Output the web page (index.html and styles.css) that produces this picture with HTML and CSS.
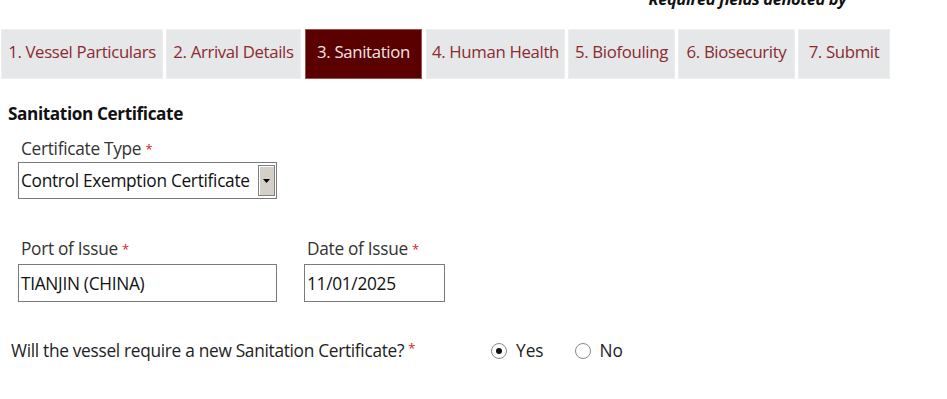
FILE: index.html
```html
<!DOCTYPE html>
<html>
<head>
<meta charset="utf-8">
<link rel="stylesheet" href="styles.css">
</head>
<body>
<div class="top">
  <div class="req">Required fields denoted by <span class="star">*</span></div>
</div>
<nav class="tabs">
  <div class="tab t1">1. Vessel Particulars</div>
  <div class="tab t2">2. Arrival Details</div>
  <div class="tab t3 active">3. Sanitation</div>
  <div class="tab t4">4. Human Health</div>
  <div class="tab t5">5. Biofouling</div>
  <div class="tab t6">6. Biosecurity</div>
  <div class="tab t7">7. Submit</div>
</nav>
<section class="content">
  <h2 class="heading">Sanitation Certificate</h2>
  <div class="field">
    <div class="label">Certificate Type <span class="star">*</span></div>
    <div class="select">
      <span class="select-text">Control Exemption Certificate</span>
      <span class="select-btn"><svg width="7" height="4" viewBox="0 0 7 4"><path d="M0 0H7L3.5 4Z" fill="#000"/></svg></span>
    </div>
  </div>
  <div class="row">
    <div class="field">
      <div class="label">Port of Issue <span class="star">*</span></div>
      <div class="input port">TIANJIN (CHINA)</div>
    </div>
    <div class="field">
      <div class="label">Date of Issue <span class="star">*</span></div>
      <div class="input date">11/01/2025</div>
    </div>
  </div>
  <div class="question">
    <div class="qtext">Will the vessel require a new Sanitation Certificate? <span class="star">*</span></div>
    <div class="radios">
      <span class="radio checked"><span class="dot"></span></span><span class="rlabel">Yes</span>
      <span class="radio"></span><span class="rlabel">No</span>
    </div>
  </div>
</section>
</body>
</html>
```
FILE: styles.css
```css
html, body {
  margin: 0;
  padding: 0;
  background: #fff;
}
body {
  font-family: "Open Sans", "Liberation Sans", sans-serif;
  color: #222;
  width: 947px;
  height: 399px;
  overflow: hidden;
}
.top {
  height: 29px;
  display: flex;
  justify-content: flex-end;
  padding-right: 90px;
}
.req {
  margin-top: -12px;
  font-size: 16.5px;
  font-weight: 700;
  font-style: italic;
  line-height: 22px;
  color: #111;
  letter-spacing: -0.4px;
}
.star {
  color: #e02020;
  font-weight: 400;
  font-style: normal;
  font-size: 13px;
  vertical-align: top;
}
.tabs {
  display: flex;
  gap: 3px;
  padding-left: 1px;
  height: 50px;
}
.tab {
  box-sizing: border-box;
  height: 50px;
  background: #e6e7e8;
  border: 1px solid #eeeeef;
  color: #8b2a31;
  font-size: 16.8px;
  letter-spacing: -0.35px;
  display: flex;
  align-items: center;
  justify-content: center;
  white-space: nowrap;
  padding-bottom: 5px;
}
.t1 { width: 162px; }
.t2 { width: 135px; }
.t3 { width: 117px; margin-left: 1px; }
.t4 { width: 139px; margin-left: 1px; }
.t5 { width: 107px; }
.t6 { width: 117px; }
.t7 { width: 92px; }
.tab.active {
  background: #5a0000;
  border-color: #9b5050;
  color: #f3e6e6;
}
.content {
  padding-left: 8px;
}
.heading {
  margin: 0;
  padding-top: 25px;
  font-size: 17.2px;
  font-weight: 700;
  line-height: 20px;
  color: #111;
  letter-spacing: -0.4px;
}
.field {
  padding-left: 10px;
}
.label {
  margin-top: 15px;
  margin-left: 3px;
  font-size: 17.3px;
  line-height: 20px;
  letter-spacing: -0.3px;
  color: #333;
}
.label .star { font-size: 13px; }
.select {
  margin-top: 3px;
  box-sizing: border-box;
  width: 259px;
  height: 37px;
  border: 1px solid #7a7a7a;
  display: flex;
  align-items: center;
  justify-content: space-between;
  padding: 0 1px 0 2px;
  background: #fff;
}
.select-text {
  font-size: 17.3px;
  letter-spacing: -0.3px;
  color: #111;
}
.select-btn {
  box-sizing: border-box;
  width: 17px;
  height: 31px;
  background: #d4d0c8;
  border: 1px solid #808080;
  box-shadow: inset 1px 1px 0 #fff;
  display: flex;
  align-items: center;
  justify-content: center;
}
.row {
  display: flex;
  gap: 27px;
  margin-top: 25px;
}
.row .field:last-child { padding-left: 0; }
.input {
  margin-top: 5px;
  box-sizing: border-box;
  height: 38px;
  border: 1px solid #7a7a7a;
  display: flex;
  align-items: center;
  padding-left: 2px;
  font-size: 17.3px;
  letter-spacing: -0.3px;
  color: #111;
}
.port { width: 259px; }
.date { width: 141px; }
.question {
  display: flex;
  align-items: center;
  margin-top: 37px;
  padding-left: 3px;
}
.qtext {
  width: 480px;
  font-size: 17.3px;
  letter-spacing: -0.3px;
  color: #222;
}
.radios {
  display: flex;
  align-items: center;
}
.radio {
  box-sizing: border-box;
  width: 16px;
  height: 16px;
  border-radius: 50%;
  border: 1px solid #8a8a8a;
  background: #fff;
  display: inline-flex;
  align-items: center;
  justify-content: center;
  margin-right: 9px;
}
.dot {
  width: 6px;
  height: 6px;
  border-radius: 50%;
  background: #111;
}
.rlabel {
  font-size: 17.3px;
  color: #222;
  margin-right: 31px;
}
```
